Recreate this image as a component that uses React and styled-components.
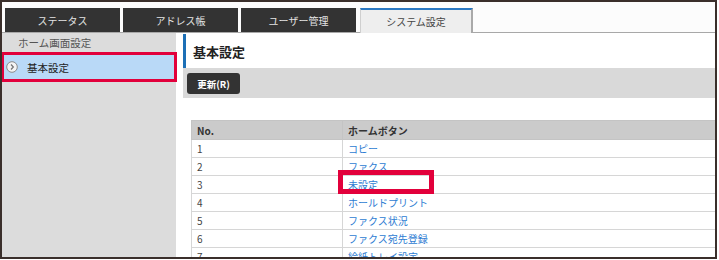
import React from "react";
import styled, { createGlobalStyle } from "styled-components";

const Global = createGlobalStyle`
  html, body { margin: 0; padding: 0; background: #ffffff; }
  body { font-family: "Noto Sans CJK JP", "Noto Sans", sans-serif; }
`;

const Frame = styled.div`
  width: 717px;
  height: 259px;
  box-sizing: border-box;
  border: 2px solid #3a2f2b;
  background: #ffffff;
  overflow: hidden;
  display: flex;
  flex-direction: column;
`;

const TabBar = styled.div`
  display: flex;
  flex-shrink: 0;
  gap: 3px;
  padding: 6px 0 0 3px;
  height: 31px;
  box-sizing: border-box;
  border-bottom: 1px solid #a8a8a8;
  background: #fcfcfc;
`;

const Tab = styled.div`
  width: ${(p) => (p.$active ? "113px" : "115px")};
  height: ${(p) => (p.$active ? "25px" : "24px")};
  box-sizing: border-box;
  display: flex;
  align-items: center;
  justify-content: center;
  font-size: 10px;
  margin-left: ${(p) => (p.$active ? "1px" : "0")};
  margin-bottom: ${(p) => (p.$active ? "-1px" : "0")};
  color: ${(p) => (p.$active ? "#444" : "#e4e4e4")};
  background: ${(p) => (p.$active ? "#eeeeee" : "#333333")};
  border-top: ${(p) => (p.$active ? "2px solid #2a78c2" : "none")};
  border-left: ${(p) => (p.$active ? "1px solid #cfcfcf" : "none")};
  border-right: ${(p) => (p.$active ? "2px solid #a9a9a9" : "none")};
`;

const Body = styled.div`
  flex: 1;
  display: flex;
  gap: 7px;
  min-height: 0;
`;

const Sidebar = styled.div`
  width: 174px;
  background: #dcdcdc;
  display: flex;
  flex-direction: column;
  padding-left: 1px;
  box-sizing: border-box;
`;

const SideHeading = styled.div`
  height: 19px;
  padding-left: 15px;
  display: flex;
  align-items: center;
  font-size: 10.5px;
  color: #555;
  border-bottom: 1px solid #eaeaea;
`;

const SideItem = styled.div`
  margin: 2px 0 0 1px;
  width: 170px;
  height: 24px;
  box-sizing: border-box;
  background: #b9d9f7;
  display: flex;
  align-items: center;
  gap: 9px;
  padding-left: 2px;
  font-size: 10.5px;
  color: #222;
  outline: 3px solid #e2003b;
  outline-offset: 0px;
`;

const Main = styled.div`
  flex: 1;
  display: flex;
  flex-direction: column;
  min-width: 0;
  overflow: hidden;
`;

const Header = styled.div`
  flex-shrink: 0;
  height: 34px;
  box-sizing: border-box;
  border-left: 3px solid #1c6fb6;
  padding-left: 7px;
  display: flex;
  align-items: center;
  font-size: 13px;
  font-weight: bold;
  color: #222;
  margin-top: 1px;
`;

const Toolbar = styled.div`
  flex-shrink: 0;
  height: 30px;
  box-sizing: border-box;
  background: #d9d9d9;
  padding: 5px 4px;
  display: flex;
`;

const Button = styled.button`
  width: 53px;
  height: 21px;
  border: none;
  border-radius: 3px;
  background: #333;
  color: #fff;
  font-family: inherit;
  font-size: 9.5px;
  font-weight: bold;
  padding: 0;
`;

const Table = styled.table`
  flex-shrink: 0;
  margin: 22px 0 0 8px;
  width: 540px;
  border-collapse: collapse;
  font-size: 10px;
`;

const Th = styled.th`
  height: 19px;
  box-sizing: border-box;
  background: #cbcbcb;
  text-align: left;
  font-weight: bold;
  color: #333;
  padding: 0 0 0 5px;
  border: 1px solid #c4c4c4;
  width: ${(p) => p.$w || "auto"};
`;

const Td = styled.td`
  height: 18px;
  box-sizing: border-box;
  padding: 0 0 0 5px;
  border: 1px solid #d6d6d6;
  color: #444;
  position: relative;
`;

const Link = styled.a`
  color: #2d7cd2;
  text-decoration: none;
`;

const Highlight = styled.span`
  position: absolute;
  left: -5px;
  top: -6px;
  width: 96px;
  height: 24px;
  box-sizing: border-box;
  border: 5px solid #e2003b;
  pointer-events: none;
`;

const ArrowIcon = () => (
  <svg width="12" height="12" viewBox="0 0 12 12">
    <circle cx="6" cy="6" r="5.3" fill="#f4f4f4" stroke="#8a8a8a" strokeWidth="1" />
    <path d="M5 3.5 L7.3 6 L5 8.5" fill="none" stroke="#777" strokeWidth="1.3" />
  </svg>
);

const rows = [
  ["1", "コピー"],
  ["2", "ファクス"],
  ["3", "未設定", true],
  ["4", "ホールドプリント"],
  ["5", "ファクス状況"],
  ["6", "ファクス宛先登録"],
  ["7", "給紙トレイ設定"],
];

export default function App() {
  return (
    <>
      <Global />
      <Frame>
        <TabBar>
          <Tab>ステータス</Tab>
          <Tab>アドレス帳</Tab>
          <Tab>ユーザー管理</Tab>
          <Tab $active>システム設定</Tab>
        </TabBar>
        <Body>
          <Sidebar>
            <SideHeading>ホーム画面設定</SideHeading>
            <SideItem>
              <ArrowIcon />
              基本設定
            </SideItem>
          </Sidebar>
          <Main>
            <Header>基本設定</Header>
            <Toolbar>
              <Button>更新(R)</Button>
            </Toolbar>
            <Table>
              <thead>
                <tr>
                  <Th $w="151px">No.</Th>
                  <Th>ホームボタン</Th>
                </tr>
              </thead>
              <tbody>
                {rows.map(([n, label, hl]) => (
                  <tr key={n}>
                    <Td>{n}</Td>
                    <Td>
                      <Link href="#">{label}</Link>
                      {hl && <Highlight />}
                    </Td>
                  </tr>
                ))}
              </tbody>
            </Table>
          </Main>
        </Body>
      </Frame>
    </>
  );
}
